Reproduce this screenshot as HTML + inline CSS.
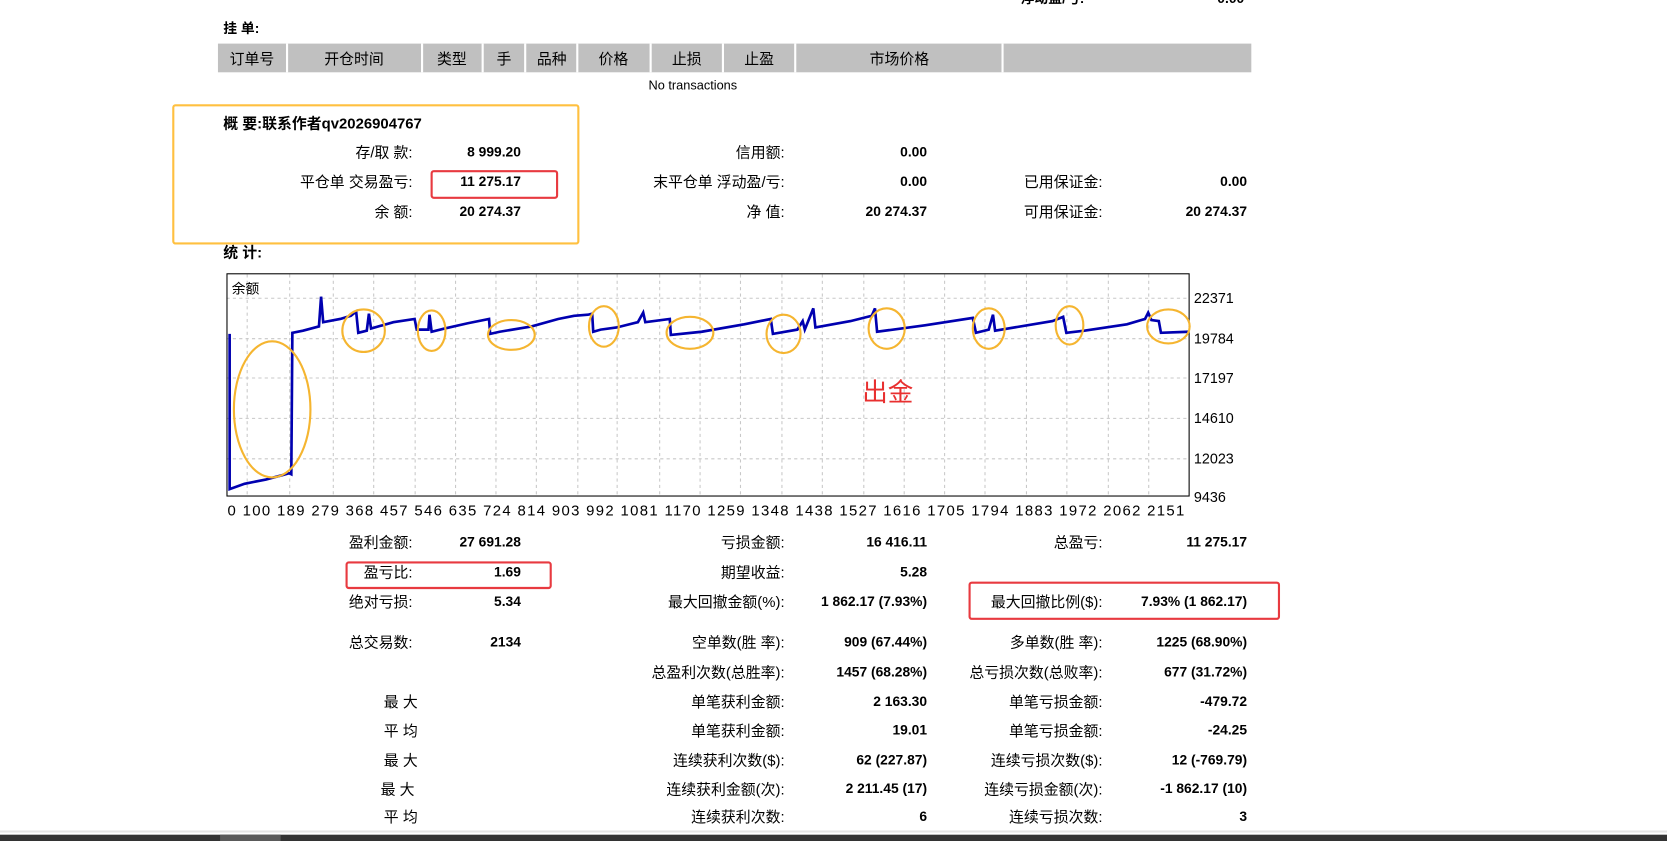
<!DOCTYPE html>
<html><head><meta charset="utf-8"><style>
html,body{margin:0;padding:0;background:#fff;overflow:hidden;width:1667px;height:840px}
#w{position:absolute;left:0;top:0;width:1568px;height:790px;transform:scale(1.06314,1.06329);transform-origin:0 0;font-family:"Liberation Sans","Noto Sans CJK SC",sans-serif;font-size:13px;color:#000}
.t{position:absolute;white-space:nowrap;line-height:18px}
.b{font-weight:bold;font-size:13px}
.l{text-align:right;width:300px}
.l:not(.b){font-size:14px}
</style></head><body><div id="w">
<div class="t b" style="left:960px;top:-10px">浮动盈/亏:</div>
<div class="t b" style="left:1145px;top:-10px">0.00</div>
<div class="t b" style="left:210px;top:18px">挂 单:</div>
<div style="position:absolute;left:205px;top:41px;width:972px;height:27px;background:#c0c0c0"></div>
<div style="position:absolute;top:41px;height:27px;left:269px;width:2px;background:#fff"></div>
<div style="position:absolute;top:41px;height:27px;left:396px;width:2px;background:#fff"></div>
<div style="position:absolute;top:41px;height:27px;left:453px;width:2px;background:#fff"></div>
<div style="position:absolute;top:41px;height:27px;left:493px;width:2px;background:#fff"></div>
<div style="position:absolute;top:41px;height:27px;left:542px;width:2px;background:#fff"></div>
<div style="position:absolute;top:41px;height:27px;left:611px;width:2px;background:#fff"></div>
<div style="position:absolute;top:41px;height:27px;left:679px;width:2px;background:#fff"></div>
<div style="position:absolute;top:41px;height:27px;left:747px;width:2px;background:#fff"></div>
<div style="position:absolute;top:41px;height:27px;left:942px;width:2px;background:#fff"></div>
<div class="t" style="left:216px;top:46px;font-size:14px">订单号</div>
<div class="t" style="left:305px;top:46px;font-size:14px">开仓时间</div>
<div class="t" style="left:411px;top:46px;font-size:14px">类型</div>
<div class="t" style="left:467px;top:46px;font-size:14px">手</div>
<div class="t" style="left:505px;top:46px;font-size:14px">品种</div>
<div class="t" style="left:563px;top:46px;font-size:14px">价格</div>
<div class="t" style="left:632px;top:46px;font-size:14px">止损</div>
<div class="t" style="left:700px;top:46px;font-size:14px">止盈</div>
<div class="t" style="left:818px;top:46px;font-size:14px">市场价格</div>
<div class="t" style="left:610px;top:71px;font-size:12px">No transactions</div>

<div style="position:absolute;left:162px;top:98px;width:379px;height:128px;border:2px solid #ffc040;border-radius:3px"></div>
<div style="position:absolute;left:405px;top:160px;width:116px;height:23px;border:2px solid #e83a40;border-radius:3px"></div>
<div class="t b" style="left:210px;top:107px;font-size:14px">概 要:联系作者qv2026904767</div>
<div class="t l" style="left:88px;top:134px">存/取 款:</div><div class="t l b" style="left:190px;top:134px">8 999.20</div>
<div class="t l" style="left:88px;top:162px">平仓单 交易盈亏:</div><div class="t l b" style="left:190px;top:162px">11 275.17</div>
<div class="t l" style="left:88px;top:190px">余 额:</div><div class="t l b" style="left:190px;top:190px">20 274.37</div>
<div class="t l" style="left:438px;top:134px">信用额:</div><div class="t l b" style="left:572px;top:134px">0.00</div>
<div class="t l" style="left:438px;top:162px">末平仓单 浮动盈/亏:</div><div class="t l b" style="left:572px;top:162px">0.00</div>
<div class="t l" style="left:438px;top:190px">净 值:</div><div class="t l b" style="left:572px;top:190px">20 274.37</div>
<div class="t l" style="left:737px;top:162px">已用保证金:</div><div class="t l b" style="left:873px;top:162px">0.00</div>
<div class="t l" style="left:737px;top:190px">可用保证金:</div><div class="t l b" style="left:873px;top:190px">20 274.37</div>
<div class="t b" style="left:210px;top:228px;font-size:14px">统 计:</div>

<svg style="position:absolute;left:0;top:0" width="1568" height="500">
<g stroke="#c8c8c8" stroke-dasharray="3,3" stroke-width="1">
<line x1="213" x2="1118" y1="280.5" y2="280.5"/><line x1="213" x2="1118" y1="318.5" y2="318.5"/><line x1="213" x2="1118" y1="355.5" y2="355.5"/><line x1="213" x2="1118" y1="393.5" y2="393.5"/><line x1="213" x2="1118" y1="431.5" y2="431.5"/>
<line x1="232.5" x2="232.5" y1="258" y2="466"/><line x1="272.5" x2="272.5" y1="258" y2="466"/><line x1="313.5" x2="313.5" y1="258" y2="466"/><line x1="351.5" x2="351.5" y1="258" y2="466"/><line x1="390.5" x2="390.5" y1="258" y2="466"/><line x1="428.5" x2="428.5" y1="258" y2="466"/><line x1="466.5" x2="466.5" y1="258" y2="466"/><line x1="504.5" x2="504.5" y1="258" y2="466"/><line x1="543.5" x2="543.5" y1="258" y2="466"/><line x1="580.5" x2="580.5" y1="258" y2="466"/><line x1="620.5" x2="620.5" y1="258" y2="466"/><line x1="658.5" x2="658.5" y1="258" y2="466"/><line x1="696.5" x2="696.5" y1="258" y2="466"/><line x1="735.5" x2="735.5" y1="258" y2="466"/><line x1="773.5" x2="773.5" y1="258" y2="466"/><line x1="812.5" x2="812.5" y1="258" y2="466"/><line x1="850.5" x2="850.5" y1="258" y2="466"/><line x1="888.5" x2="888.5" y1="258" y2="466"/><line x1="926.5" x2="926.5" y1="258" y2="466"/><line x1="965.5" x2="965.5" y1="258" y2="466"/><line x1="1003.5" x2="1003.5" y1="258" y2="466"/><line x1="1042.5" x2="1042.5" y1="258" y2="466"/><line x1="1080.5" x2="1080.5" y1="258" y2="466"/>
</g>
<rect x="213.5" y="257.5" width="905" height="209" fill="none" stroke="#000" stroke-width="1"/>
<g font-family="Liberation Sans, sans-serif" font-size="13.5" fill="#000">
<text x="1123" y="285">22371</text><text x="1123" y="323">19784</text><text x="1123" y="360">17197</text><text x="1123" y="398">14610</text><text x="1123" y="436">12023</text><text x="1123" y="472">9436</text>
<text y="485" font-size="14" textLength="900" x="214">0 100 189 279 368 457 546 635 724 814 903 992 1081 1170 1259 1348 1438 1527 1616 1705 1794 1883 1972 2062 2151</text>
<text x="218" y="276" font-family="Noto Sans CJK SC, sans-serif" font-size="13">余额</text>
</g>
<polyline fill="none" stroke="#0000b0" stroke-width="2.5" points="216,314 216,460 230,455 250,451 265,447 272,445 274,446 275,313 285,311 300,307 302,279 304,303 320,300 330,297 335,293 337,313 345,311 347,295 349,309 370,303 390,300 392,310 403,310 404,296 406,312 418,309 440,304 460,300 461,314 470,312 500,307 525,300 540,297 553,296 557,295 558,312 565,310 580,308 600,303 605,294 607,303 630,300 631,315 660,312 700,305 725,300 727,314 750,310 755,302 757,310 765,290 767,308 800,302 820,297 823,290 825,312 870,306 915,299 918,313 930,310 934,296 936,311 990,302 1000,298 1003,313 1020,311 1060,305 1077,300 1080,294 1083,301 1090,302 1092,313 1118,312"/>
<g fill="none" stroke="#f5b530" stroke-width="2">
<ellipse cx="256" cy="385" rx="36" ry="64"/>
<ellipse cx="342" cy="311" rx="20" ry="20"/><ellipse cx="406" cy="311" rx="13" ry="19"/><ellipse cx="481" cy="315" rx="22" ry="14"/><ellipse cx="568" cy="307" rx="14" ry="19"/><ellipse cx="649" cy="313" rx="22" ry="15"/><ellipse cx="737" cy="314" rx="16" ry="18"/><ellipse cx="834" cy="309" rx="17" ry="19"/><ellipse cx="930" cy="309" rx="15" ry="19"/><ellipse cx="1006" cy="306" rx="13" ry="18"/><ellipse cx="1099" cy="307" rx="20" ry="16"/>
</g>
<text x="811" y="377" font-family="Noto Sans CJK SC, sans-serif" font-size="24" fill="#e83030">出金</text>
</svg>

<div style="position:absolute;left:325px;top:528px;width:190px;height:22px;border:2px solid #e83a40;border-radius:3px"></div>
<div style="position:absolute;left:911px;top:547px;width:289px;height:32px;border:2px solid #e83a40;border-radius:3px"></div>

<div class="t l" style="left:88px;top:501px">盈利金额:</div><div class="t l b" style="left:190px;top:501px">27 691.28</div>
<div class="t l" style="left:438px;top:501px">亏损金额:</div><div class="t l b" style="left:572px;top:501px">16 416.11</div>
<div class="t l" style="left:737px;top:501px">总盈亏:</div><div class="t l b" style="left:873px;top:501px">11 275.17</div>

<div class="t l" style="left:88px;top:529px">盈亏比:</div><div class="t l b" style="left:190px;top:529px">1.69</div>
<div class="t l" style="left:438px;top:529px">期望收益:</div><div class="t l b" style="left:572px;top:529px">5.28</div>

<div class="t l" style="left:88px;top:557px">绝对亏损:</div><div class="t l b" style="left:190px;top:557px">5.34</div>
<div class="t l" style="left:438px;top:557px">最大回撤金额(%):</div><div class="t l b" style="left:572px;top:557px">1 862.17 (7.93%)</div>
<div class="t l" style="left:737px;top:557px">最大回撤比例($):</div><div class="t l b" style="left:873px;top:557px">7.93% (1 862.17)</div>

<div class="t l" style="left:88px;top:595px">总交易数:</div><div class="t l b" style="left:190px;top:595px">2134</div>
<div class="t l" style="left:438px;top:595px">空单数(胜 率):</div><div class="t l b" style="left:572px;top:595px">909 (67.44%)</div>
<div class="t l" style="left:737px;top:595px">多单数(胜 率):</div><div class="t l b" style="left:873px;top:595px">1225 (68.90%)</div>

<div class="t l" style="left:438px;top:623px">总盈利次数(总胜率):</div><div class="t l b" style="left:572px;top:623px">1457 (68.28%)</div>
<div class="t l" style="left:737px;top:623px">总亏损次数(总败率):</div><div class="t l b" style="left:873px;top:623px">677 (31.72%)</div>

<div class="t" style="left:361px;top:651px;font-size:14px">最 大</div>
<div class="t l" style="left:438px;top:651px">单笔获利金额:</div><div class="t l b" style="left:572px;top:651px">2 163.30</div>
<div class="t l" style="left:737px;top:651px">单笔亏损金额:</div><div class="t l b" style="left:873px;top:651px">-479.72</div>

<div class="t" style="left:361px;top:678px;font-size:14px">平 均</div>
<div class="t l" style="left:438px;top:678px">单笔获利金额:</div><div class="t l b" style="left:572px;top:678px">19.01</div>
<div class="t l" style="left:737px;top:678px">单笔亏损金额:</div><div class="t l b" style="left:873px;top:678px">-24.25</div>

<div class="t" style="left:361px;top:706px;font-size:14px">最 大</div>
<div class="t l" style="left:438px;top:706px">连续获利次数($):</div><div class="t l b" style="left:572px;top:706px">62 (227.87)</div>
<div class="t l" style="left:737px;top:706px">连续亏损次数($):</div><div class="t l b" style="left:873px;top:706px">12 (-769.79)</div>

<div class="t" style="left:358px;top:733px;font-size:14px">最 大</div>
<div class="t l" style="left:438px;top:733px">连续获利金额(次):</div><div class="t l b" style="left:572px;top:733px">2 211.45 (17)</div>
<div class="t l" style="left:737px;top:733px">连续亏损金额(次):</div><div class="t l b" style="left:873px;top:733px">-1 862.17 (10)</div>

<div class="t" style="left:361px;top:759px;font-size:14px">平 均</div>
<div class="t l" style="left:438px;top:759px">连续获利次数:</div><div class="t l b" style="left:572px;top:759px">6</div>
<div class="t l" style="left:737px;top:759px">连续亏损次数:</div><div class="t l b" style="left:873px;top:759px">3</div>

<div style="position:absolute;left:0;top:781px;width:1568px;height:2px;background:#e4e4e4"></div>
<div style="position:absolute;left:0;top:785px;width:1568px;height:6px;background:#333"></div>
<div style="position:absolute;left:207px;top:785px;width:57px;height:6px;background:#5a5a5a"></div>
</div></body></html>
